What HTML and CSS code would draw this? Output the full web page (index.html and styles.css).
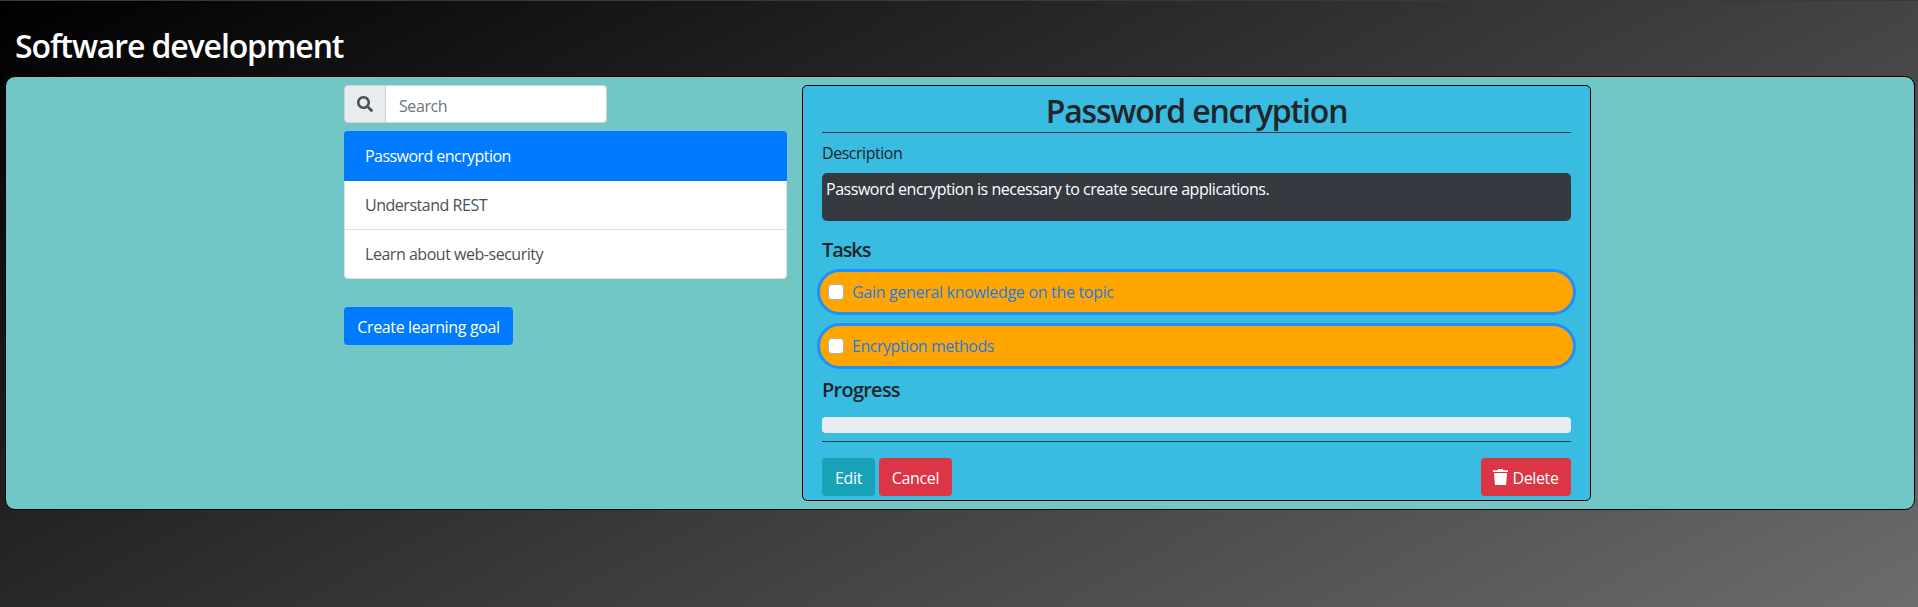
FILE: index.html
```html
<!DOCTYPE html>
<html lang="en">
<head>
<meta charset="utf-8">
<title>Software development</title>
<link rel="stylesheet" href="styles.css">
</head>
<body>
<h2 class="page-title"><span class="t-page">Software development</span></h2>
<main class="board">
  <section class="sidebar">
    <div class="search">
      <span class="search-icon"><svg width="16" height="16" viewBox="0 0 512 512"><path fill="currentColor" d="M505 442.700L405.300 343c-4.500-4.500-10.600-7-17-7H372c27.600-35.300 44-79.700 44-128C416 93.100 322.900 0 208 0S0 93.100 0 208s93.100 208 208 208c48.300 0 92.700-16.400 128-44v16.300c0 6.400 2.500 12.500 7 17l99.700 99.700c9.400 9.400 24.600 9.400 33.900 0l28.300-28.300c9.400-9.400 9.400-24.600.1-34zM208 336c-70.700 0-128-57.200-128-128 0-70.700 57.200-128 128-128 70.700 0 128 57.200 128 128 0 70.700-57.200 128-128 128z"/></svg></span>
      <input class="search-input" type="text" placeholder="Search">
    </div>
    <div class="goals">
      <a class="goal active"><span class="t-goal1">Password encryption</span></a>
      <a class="goal"><span class="t-goal2">Understand REST</span></a>
      <a class="goal"><span class="t-goal3">Learn about web-security</span></a>
    </div>
    <button class="btn primary create"><span class="t-create">Create learning goal</span></button>
  </section>
  <section class="card">
    <h2 class="card-title"><span class="t-card">Password encryption</span></h2>
    <p class="label"><span class="t-label">Description</span></p>
    <div class="description"><span class="t-desc">Password encryption is necessary to create secure applications.</span></div>
    <h5 class="heading tasks-heading"><span class="t-tasks">Tasks</span></h5>
    <div class="tasks">
      <label class="task"><span class="check"></span><span class="t-task1">Gain general knowledge on the topic</span></label>
      <label class="task"><span class="check"></span><span class="t-task2">Encryption methods</span></label>
    </div>
    <h5 class="heading progress-heading"><span class="t-progress">Progress</span></h5>
    <div class="progress"></div>
    <div class="actions">
      <button class="btn info edit"><span class="t-edit">Edit</span></button>
      <button class="btn danger cancel"><span class="t-cancel">Cancel</span></button>
      <button class="btn danger delete"><svg width="15" height="16" viewBox="0 0 15 16"><path fill="currentColor" d="M0 1.200h4.600L5.300 0h4.400l.7 1.200H15V3H0zM1 4h13l-.9 12H2z"/></svg><span class="t-delete">Delete</span></button>
    </div>
  </section>
</main>
</body>
</html>
```
FILE: styles.css
```css
* { box-sizing: border-box; }
html { height: 100%; }
body {
  margin: 0;
  height: 100%;
  overflow: hidden;
  border-top: 1px solid #343a40;
  background: linear-gradient(152deg, #000, #6c6c6c);
  font-family: "Open Sans", "Noto Sans", sans-serif;
  font-size: 16px;
  line-height: 24px;
  letter-spacing: -0.47px;
  color: #212529;
}
h2, h5, p { margin: 0; }
span { white-space: nowrap; }
.page-title {
  height: 75px;
  padding: 26px 0 0 15px;
  font-size: 32px;
  font-weight: 600;
  line-height: 38px;
  letter-spacing: -1.12px;
  color: #fff;
}
.board {
  display: flex;
  align-items: flex-start;
  gap: 15px;
  height: 434px;
  margin: 0 3px 0 5px;
  padding: 8px 0 0 338px;
  border: 1px solid #000;
  border-radius: 10px;
  background: #71c7c5;
}
.sidebar { width: 443px; }
.search { display: flex; width: 263px; height: 38px; margin-bottom: 8px; }
.search-icon {
  display: flex;
  align-items: center;
  justify-content: center;
  width: 42px;
  padding-bottom: 1px;
  border: 1px solid #ced4da;
  border-radius: 4px 0 0 4px;
  background: #e9ecef;
  color: #495057;
}
.search-input {
  width: 222px;
  margin-left: -1px;
  padding: 5px 12px 2px 13px;
  border: 1px solid #ced4da;
  border-radius: 0 4px 4px 0;
  background: #fff;
  font: inherit;
  letter-spacing: -0.4px;
}
.search-input::placeholder { color: #6c757d; opacity: 1; }
.goals { border-radius: 4px; overflow: hidden; }
.goal {
  display: block;
  height: 49px;
  padding: 12px 20px 0;
  border: 1px solid #dfdfdf;
  border-top: 0;
  background: #fff;
  color: #495057;
}
.goal:last-child { border-radius: 0 0 4px 4px; }
.goal.active { height: 50px; padding-top: 13px; border-color: #007bff; background: #007bff; color: #fff; }
.t-goal1 { letter-spacing: -0.55px; }
.btn {
  display: flex;
  align-items: center;
  justify-content: center;
  height: 38px;
  padding: 1px 0 0;
  border: 0;
  border-radius: 4px;
  font: inherit;
  letter-spacing: -0.35px;
  color: #fff;
}
.primary { background: #007bff; }
.info { background: #17a2b8; }
.danger { background: #dc3545; }
.create { width: 169px; margin-top: 28px; }
.card {
  width: 789px;
  height: 416px;
  padding: 0 19px;
  border: 1px solid #000;
  border-radius: 5px;
  background: #38bce2;
}
.card-title {
  height: 47px;
  padding-top: 6px;
  border-bottom: 1px solid #343a40;
  font-size: 32px;
  font-weight: 600;
  line-height: 38px;
  letter-spacing: -1.18px;
  text-align: center;
}
.label { height: 40px; padding-top: 8px; }
.description {
  height: 48px;
  padding: 4px;
  border-radius: 5px;
  background: #343a40;
  color: #fff;
}
.heading { font-size: 20px; font-weight: 600; line-height: 24px; letter-spacing: -0.75px; }
.t-tasks { letter-spacing: -1.1px; }
.tasks-heading { height: 48px; padding-top: 17px; }
.tasks { display: grid; gap: 8px; margin: 0 -5px; }
.task {
  display: flex;
  align-items: center;
  gap: 8px;
  height: 46px;
  padding-left: 8px;
  border: 3px solid #1e90ff;
  border-radius: 23px;
  background: orange;
  color: #1e7be0;
}
.t-task1 { letter-spacing: -0.31px; }
.check {
  width: 16px;
  height: 16px;
  border: 1px solid #adb5bd;
  border-radius: 4px;
  background: #fff;
}
.progress-heading { height: 48px; padding-top: 9px; }
.progress { height: 16px; margin-bottom: 8px; border-radius: 4px; background: #e9ecef; }
.actions { display: flex; gap: 4px; padding-top: 16px; border-top: 1px solid #343a40; }
.edit { width: 53px; }
.cancel { width: 73px; }
.delete { width: 90px; margin-left: auto; gap: 4px; }
.delete svg { margin-top: -2px; }
```
